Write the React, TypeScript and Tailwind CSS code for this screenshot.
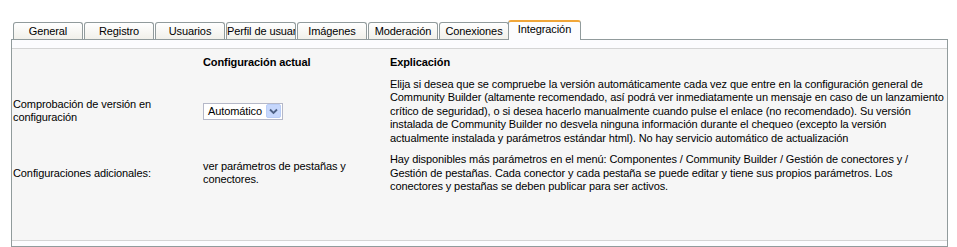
const tabs = ['General', 'Registro', 'Usuarios', 'Perfil de usuario', 'Imágenes', 'Moderación', 'Conexiones', 'Integración'];
const active = 'Integración';

const versionHelp = [
  'Elija si desea que se compruebe la versión automáticamente cada vez que entre en la configuración general de',
  'Community Builder (altamente recomendado, así podrá ver inmediatamente un mensaje en caso de un lanzamiento',
  'crítico de seguridad), o si desea hacerlo manualmente cuando pulse el enlace (no recomendado). Su versión',
  'instalada de Community Builder no desvela ninguna información durante el chequeo (excepto la versión',
  'actualmente instalada y parámetros estándar html). No hay servicio automático de actualización',
];

const extraHelp = [
  'Hay disponibles más parámetros en el menú: Componentes / Community Builder / Gestión de conectores y /',
  'Gestión de pestañas. Cada conector y cada pestaña se puede editar y tiene sus propios parámetros. Los',
  'conectores y pestañas se deben publicar para ser activos.',
];

function Lines({ lines }: { lines: string[] }) {
  return (
    <div>
      {lines.map((l) => (
        <div key={l} className="whitespace-nowrap">{l}</div>
      ))}
    </div>
  );
}

function Tab({ label }: { label: string }) {
  if (label === active) {
    return (
      <div className="relative z-10 -mb-px -ml-[2px] -mr-[1px] h-[20px] w-[73px] rounded-t-[3px] border-x border-t-2 border-x-[#919b9c] border-t-[#f0a63a] bg-[#fcfcfe] pt-[1px] text-center">
        <span className="whitespace-nowrap">{label}</span>
      </div>
    );
  }
  return (
    <div className="h-[17px] w-[70px] overflow-hidden whitespace-nowrap rounded-t-[3px] border-x border-t border-[#919b9c] bg-gradient-to-b from-white to-[#f1f0ea] text-center leading-[17px]">
      {label}
    </div>
  );
}

function VersionSelect() {
  return (
    <div className="flex h-[17px] w-[80px] items-center border border-[#b5b8c8] bg-white pl-[4px] pr-[1px]">
      <span className="flex-1 whitespace-nowrap">Automático</span>
      <span className="flex h-[14px] w-[15px] items-center justify-center rounded-[2px] border border-[#b9cdf7] bg-[#c6d7fc]">
        <svg width="9" height="7" viewBox="0 0 9 7">
          <path d="M1 1.5 L4.5 5 L8 1.5" fill="none" stroke="#4d6185" strokeWidth="1.8" />
        </svg>
      </span>
    </div>
  );
}

export default function App() {
  return (
    <div className="min-h-[247px] bg-white pl-[11px] pr-[9px] pt-[20px] font-['Liberation_Sans',Arial,sans-serif] text-[11px] leading-[13.5px] tracking-[-0.1px] text-black">
      <div className="flex h-[19px] items-end gap-[1px] pl-[2px]">
        {tabs.map((t) => (
          <Tab key={t} label={t} />
        ))}
      </div>

      <div className="border border-[#919b9c]">
        <div className="h-[9px] border-b border-[#d4d4d4] bg-[#fcfcfe]" />
        <div className="h-[192px] border-b border-[#d4d4d4] bg-[#f6f6f6] pl-[1px] pt-[3px]">
          <div className="grid grid-cols-[190px_187px_1fr] items-center">
            <div className="py-[4px]" />
            <div className="py-[4px] font-bold">Configuración actual</div>
            <div className="py-[4px] font-bold">Explicación</div>

            <div className="py-[4px]">
              Comprobación de versión en
              <br />
              configuración
            </div>
            <div className="py-[4px]">
              <VersionSelect />
            </div>
            <div className="py-[4px]">
              <Lines lines={versionHelp} />
            </div>

            <div className="py-[4px]">Configuraciones adicionales:</div>
            <div className="py-[4px]">
              ver parámetros de pestañas y
              <br />
              conectores.
            </div>
            <div className="py-[4px]">
              <Lines lines={extraHelp} />
            </div>
          </div>
        </div>
        <div className="h-[5px] bg-[#fcfcfe]" />
      </div>
    </div>
  );
}
